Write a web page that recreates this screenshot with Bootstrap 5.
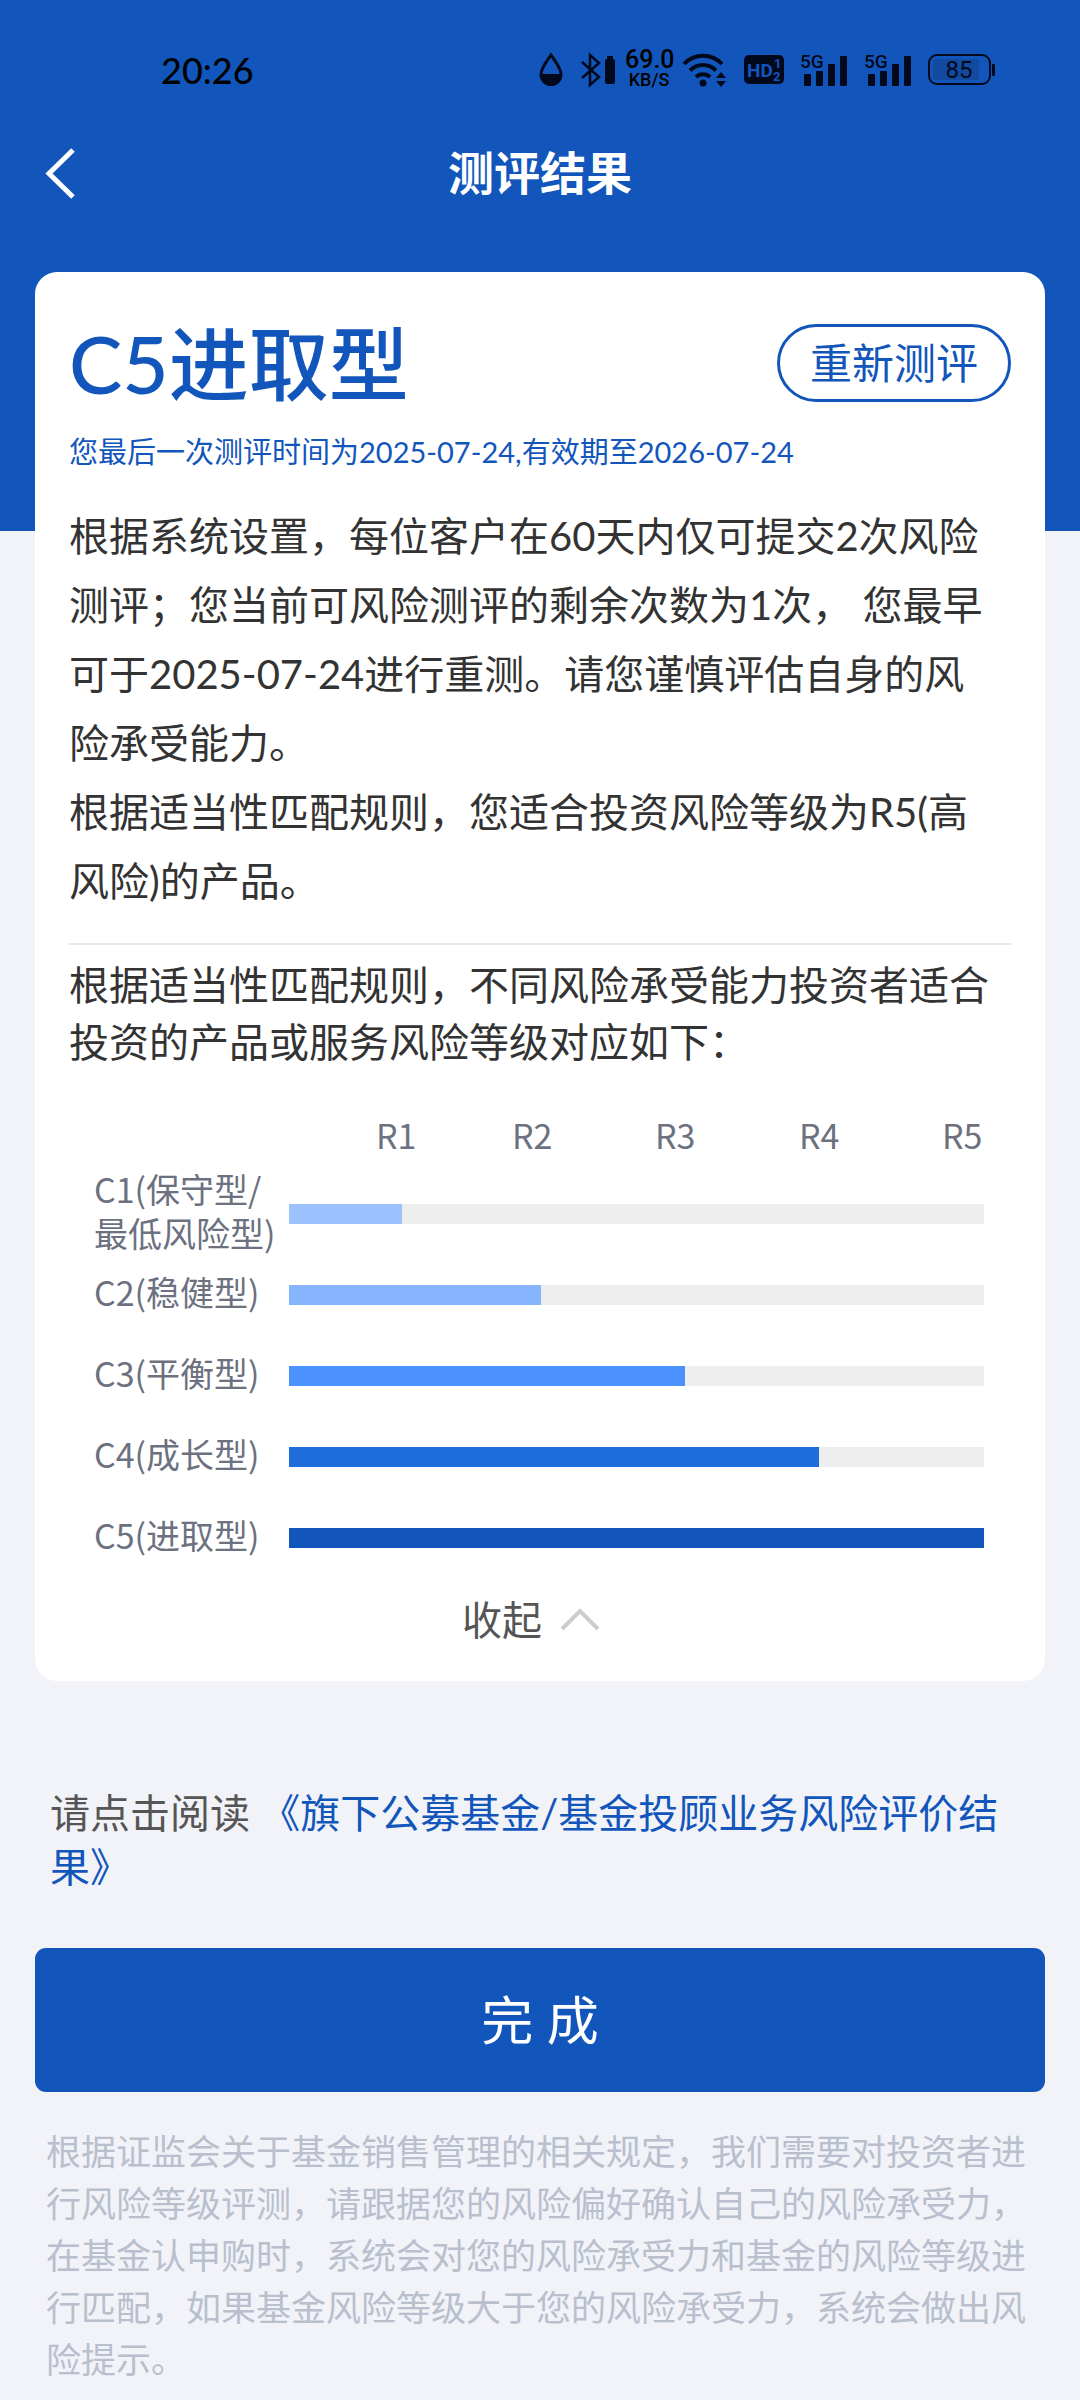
<!DOCTYPE html>
<html lang="zh-CN">
<head>
<meta charset="utf-8">
<meta name="viewport" content="width=device-width, initial-scale=1">
<title>测评结果</title>
<link href="https://cdn.jsdelivr.net/npm/bootstrap@5.3.0/dist/css/bootstrap.min.css" rel="stylesheet">
<style>
  :root { --brand: #1256bb; --ink: #333; }
  body { background: #f1f3f8; color: var(--ink); font-family: Lato, "Noto Sans CJK SC", sans-serif; font-size: 40px; }
  .hero { background: var(--brand); padding-bottom: 259px; }
  .status { height: 139px; padding: 0 84px 0 161px; color: #02091c; }
  .clock { font-size: 36px; line-height: 40px; font-weight: 500; color: #000; }
  .status-icons { gap: 16px; }
  .status-icons svg { overflow: visible; }
  .speed { width: 48px; margin: 0 -7px; font-size: 25px; line-height: 20px; font-weight: 500; font-family: Roboto, sans-serif; color: #000; }
  .speed small { display: block; font-size: 18px; line-height: 20px; font-weight: 500; }
  .topbar { height: 133px; padding: 0 35px 65px; }
  .back-btn { width: 50px; padding: 0; border: 0; }
  .page-title { font-size: 46px; line-height: 66px; font-weight: 700; }
  main { margin-top: -259px; padding: 0 35px; }
  .result-card { border: 0; border-radius: 22px; padding: 47px 34px 31px; }
  .grade { color: var(--brand); font-size: 80px; line-height: 88px; font-weight: 500; }
  .retest { color: var(--brand); border: 3px solid var(--brand); font-size: 42px; line-height: 60px; padding: 6px 30px; }
  .period { color: var(--brand); font-size: 29px; line-height: 44px; margin: 23px 0 28px; }
  .notice { line-height: 69px; }
  .rule { border-top: 2px solid #e6e6e6; margin: 27px 0 12px; }
  .intro { line-height: 57px; }
  .chart { font-family: "Noto Sans CJK SC", sans-serif; font-size: 34px; line-height: 44px; color: #6c7180; padding: 42px 27px 0 25px; }
  .ticks { display: grid; grid-template-columns: 136fr 143fr 144fr 143fr 42px; padding-left: 282px; margin-bottom: 16px; }
  .chart-row { height: 81px; }
  .chart-label { flex: 0 0 195px; padding-bottom: 6px; white-space: nowrap; }
  .track { flex: 1; height: 20px; border-radius: 0; background: #eee; }
  .lv1 { background: #9cc3ff; } .lv2 { background: #86b4ff; } .lv3 { background: #4c92ff; }
  .lv4 { background: #1f6cdc; } .lv5 { background: var(--brand); }
  .fold { color: #555; font-size: 40px; line-height: 60px; gap: 18px; margin-top: 12px; border: 0; padding: 0 18px 0 0; }
  .reading { color: #555; line-height: 54px; padding: 0 15px; margin: 105px 0 54px; }
  .reading a { color: var(--brand); }
  .finish { background: var(--brand); border: 0; border-radius: 11px; font-size: 52px; line-height: 78px; padding: 33px; }
  .finish:hover { background: #0f4aa3; }
  .legal { color: #b9bfcd; font-size: 35px; line-height: 52px; padding: 0 11px; margin: 33px 0 0; }
</style>
</head>
<body>
<header class="hero text-white">
  <div class="status d-flex align-items-center justify-content-between">
    <span class="clock">20:26</span>
    <div class="status-icons d-flex align-items-center">
      <svg width="26" height="36" viewBox="0 0 26 36" fill="none" stroke="currentColor" stroke-width="3"><path d="M13 3C9 9 3 16 3 22.500a10 10 0 0 0 20 0C23 16 17 9 13 3Z"/><path d="M2 22h22c0 7-5 11.500-11 11.500S2 29 2 22Z" fill="currentColor" stroke="none"/></svg>
      <svg width="36" height="36" viewBox="0 0 36 36"><path d="M2 10 19 25l-9 8V3l9 8L2 26" fill="none" stroke="currentColor" stroke-width="2.500"/><rect x="25" y="7" width="10" height="25" rx="2" fill="currentColor"/><rect x="27" y="4" width="6" height="3" fill="currentColor"/></svg>
      <div class="speed text-center">69.0<small>KB/S</small></div>
      <svg width="46" height="36" viewBox="0 0 46 36"><g fill="none" stroke="currentColor" stroke-width="4"><path d="M2 12a26 26 0 0 1 38 0"/><path d="M8 18.500a18 18 0 0 1 26 0"/><path d="M14 25a10 10 0 0 1 14 0"/></g><g fill="currentColor"><circle cx="21" cy="31" r="3.500"/><path d="m34 26 5-6 5 6ZM34 29h10l-5 6Z"/></g></svg>
      <svg width="40" height="30" viewBox="0 0 40 30"><rect width="40" height="29" rx="5" fill="currentColor"/><g fill="#1256bb" font-family="Roboto, sans-serif" font-weight="700"><text x="3" y="22" font-size="19">HD</text><text x="30" y="13" font-size="13">1</text><text x="29" y="26" font-size="13">2</text></g></svg>
      <svg width="48" height="34" viewBox="0 0 48 34" fill="currentColor"><text x="0" y="15" font-family="Roboto, sans-serif" font-weight="500" font-size="19">5G</text><rect x="4" y="21" width="7" height="12" rx="1"/><rect x="16" y="18" width="7" height="15" rx="1"/><rect x="28" y="11" width="7" height="22" rx="1"/><rect x="40" y="3" width="7" height="30" rx="1"/></svg>
      <svg width="48" height="34" viewBox="0 0 48 34" fill="currentColor"><text x="0" y="15" font-family="Roboto, sans-serif" font-weight="500" font-size="19">5G</text><rect x="4" y="21" width="7" height="12" rx="1"/><rect x="16" y="18" width="7" height="15" rx="1"/><rect x="28" y="11" width="7" height="22" rx="1"/><rect x="40" y="3" width="7" height="30" rx="1"/></svg>
      <svg width="68" height="32" viewBox="0 0 68 32"><rect x="1" y="1" width="61" height="29" rx="8" fill="none" stroke="currentColor" stroke-width="2"/><rect x="5" y="5" width="46" height="21" rx="3" fill="#114a9f"/><rect x="64" y="10" width="3" height="12" rx="1" fill="currentColor"/><text x="31" y="24" text-anchor="middle" font-family="Roboto, sans-serif" font-size="24" fill="currentColor">85</text></svg>
    </div>
  </div>
  <nav class="topbar d-flex align-items-center">
    <button type="button" class="back-btn btn text-white text-start d-flex" aria-label="返回"><svg width="50" height="52" viewBox="0 0 50 52" fill="none" stroke="currentColor" stroke-width="5"><path d="M38 3 14 26.500 38 50"/></svg></button>
    <h1 class="page-title flex-fill text-center m-0">测评结果</h1>
    <span class="back-btn"></span>
  </nav>
</header>

<main>
  <section class="result-card card">
    <div class="d-flex align-items-center justify-content-between">
      <h2 class="grade m-0">C5进取型</h2>
      <button type="button" class="retest btn rounded-pill">重新测评</button>
    </div>
    <p class="period">您最后一次测评时间为2025-07-24,有效期至2026-07-24</p>
    <p class="notice m-0">根据系统设置，每位客户在60天内仅可提交2次风险测评；您当前可风险测评的剩余次数为1次， 您最早可于2025-07-24进行重测。请您谨慎评估自身的风<br>险承受能力。<br>根据适当性匹配规则，您适合投资风险等级为R5(高<br>风险)的产品。</p>
    <div class="rule"></div>
    <p class="intro m-0">根据适当性匹配规则，不同风险承受能力投资者适合投资的产品或服务风险等级对应如下：</p>

    <div class="chart">
      <div class="ticks"><span>R1</span><span>R2</span><span>R3</span><span>R4</span><span>R5</span></div>
      <div class="chart-row d-flex align-items-center"><div class="chart-label">C1(保守型/<br>最低风险型)</div><div class="track progress"><div class="lv1" style="width:16.300%"></div></div></div>
      <div class="chart-row d-flex align-items-center"><div class="chart-label">C2(稳健型)</div><div class="track progress"><div class="lv2" style="width:36.300%"></div></div></div>
      <div class="chart-row d-flex align-items-center"><div class="chart-label">C3(平衡型)</div><div class="track progress"><div class="lv3" style="width:57%"></div></div></div>
      <div class="chart-row d-flex align-items-center"><div class="chart-label">C4(成长型)</div><div class="track progress"><div class="lv4" style="width:76.300%"></div></div></div>
      <div class="chart-row d-flex align-items-center"><div class="chart-label">C5(进取型)</div><div class="track progress"><div class="lv5" style="width:100%"></div></div></div>
    </div>

    <button type="button" class="fold btn d-flex align-items-center justify-content-center">收起<svg width="40" height="26" viewBox="0 0 40 26" fill="none" stroke="#ccc" stroke-width="4"><path d="M2 22 20 4l18 18"/></svg></button>
  </section>

  <p class="reading">请点击阅读 <a class="text-decoration-none" href="#">《旗下公募基金/基金投顾业务风险评价结果》</a></p>
  <button type="button" class="finish btn text-white w-100">完 成</button>
  <p class="legal">根据证监会关于基金销售管理的相关规定，我们需要对投资者进行风险等级评测，请跟据您的风险偏好确认自己的风险承受力，在基金认申购时，系统会对您的风险承受力和基金的风险等级进行匹配，如果基金风险等级大于您的风险承受力，系统会做出风险提示。</p>
</main>
<script src="https://cdn.jsdelivr.net/npm/bootstrap@5.3.0/dist/js/bootstrap.bundle.min.js"></script>
</body>
</html>
